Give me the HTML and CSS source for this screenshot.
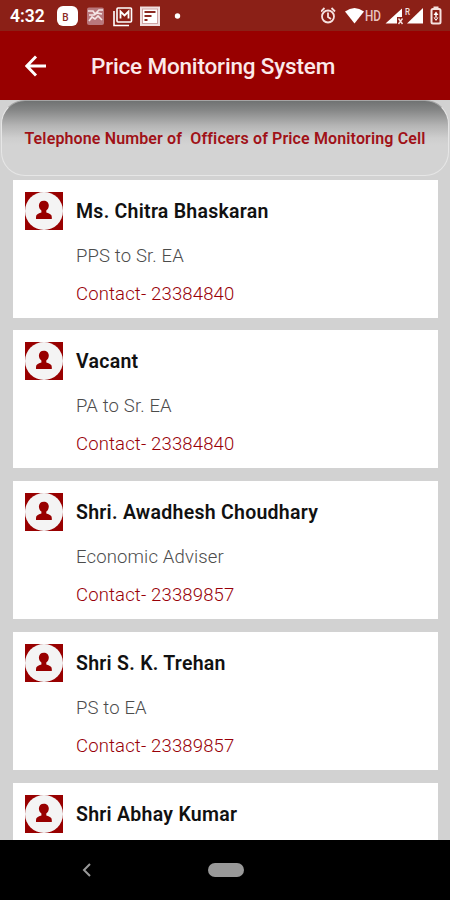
FILE: index.html
```html
<!DOCTYPE html>
<html lang="en">
<head>
  <meta charset="UTF-8">
  <meta name="viewport" content="width=device-width, initial-scale=1.0">
  <title>Price Monitoring System</title>
  <link rel="stylesheet" href="styles.css">
</head>
<body>
  <svg width="0" height="0" class="sprite">
    <symbol id="person" viewBox="0 0 38 38">
      <rect width="38" height="38" fill="#980000"/>
      <circle cx="19" cy="19" r="19" fill="#f4f4f4"/>
      <path d="M18.800 8.700c-3 0-4.900 2-4.900 4.900 0 2.300 1 3.900 2.500 5v2c-3.400 1-5.400 2-5.400 4.400v2h15.800v-2c0-2.400-2.200-3.400-5.500-4.400v-2c1.500-1.100 2.500-2.700 2.500-5 0-2.900-2-4.900-5-4.900z" fill="#980000"/>
    </symbol>
  </svg>

  <div class="screen">
    <div class="statusbar">
      <span class="clock">4:32</span>
      <svg class="notifications" width="124" height="24" viewBox="0 0 124 24">
        <!-- app badge -->
        <rect x="0" y="2" width="21" height="20" rx="6" fill="#fff"/>
        <text x="8.500" y="16.500" font-size="10" font-weight="500" text-anchor="middle" fill="#8b2a22">B</text>
        <!-- news -->
        <rect x="30" y="3.500" width="17" height="17.500" rx="2" fill="#b9777c"/>
        <path d="M31 7h5l2 3 4-4h4M32 11h5l3-2 5 1M32 17l3-4 3 2 3-3 4 4" fill="none" stroke="#f5e6e6" stroke-width="1.700"/>
        <!-- mail -->
        <path d="M57 7v14.500h15" fill="none" stroke="#fff" stroke-width="1.600"/>
        <rect x="60" y="4" width="14.500" height="14" rx="1" fill="#8b2017" stroke="#fff" stroke-width="1.600"/>
        <path d="M63.500 14.500V7.500l4 4 4-4v7" fill="none" stroke="#fff" stroke-width="1.800"/>
        <!-- notes -->
        <rect x="83" y="2.500" width="20" height="19.500" fill="#f0dede"/>
        <rect x="85.500" y="5" width="15" height="14.500" fill="#fff" stroke="#cfa6a6" stroke-width="1"/>
        <path d="M87.500 8h11M87.500 12h7M87.500 16h3" stroke="#8b2a22" stroke-width="2"/>
        <circle cx="120.500" cy="12" r="2.700" fill="#fff"/>
      </svg>
      <svg class="system" width="124" height="24" viewBox="0 0 124 24">
        <!-- alarm -->
        <g fill="none" stroke="#f6e2e0" stroke-width="1.800">
          <circle cx="7" cy="12.500" r="6"/>
          <path d="M7 8.500V13l3 2M0 7.500L3.500 4M14 7.500L10.500 4"/>
        </g>
        <!-- wifi -->
        <path d="M24 7.500Q33.500 .5 43 7.500L33.500 19.500z" fill="#fff"/>
        <text x="44" y="17" font-size="14.500" font-weight="500" textLength="16" lengthAdjust="spacingAndGlyphs" fill="#e9c4c0">HD</text>
        <!-- signal -->
        <path d="M81 4.500v8.500h-5v6.500H64.500z" fill="#fff"/>
        <path d="M77.500 14.500l4 5.500M81.500 14.500l-4 5.500" stroke="#f6e2e0" stroke-width="1.400"/>
        <text x="84" y="11" font-size="9" font-weight="500" textLength="5" lengthAdjust="spacingAndGlyphs" fill="#f6e2e0">R</text>
        <path d="M102 4V19.500H86z" fill="#fff"/>
        <!-- battery -->
        <rect x="110.500" y="5" width="9" height="14.500" rx="1.500" fill="none" stroke="#f6e2e0" stroke-width="2"/>
        <path d="M112.500 3.500h5" stroke="#f6e2e0" stroke-width="2"/>
        <path d="M115 7.500l2.500 3.500h-5zM115 17l2.500-3.500h-5zM114.300 9h1.400v6h-1.400z" fill="#fff"/>
      </svg>
    </div>

    <header class="appbar">
      <svg class="back" width="22" height="22" viewBox="0 0 22 22">
        <path d="M21 11H2M11 1.500L1.800 11l9.200 9.500" fill="none" stroke="#fff" stroke-width="2.900"/>
      </svg>
      <h1 class="title">Price Monitoring System</h1>
    </header>

    <main class="content">
      <h2 class="banner">Telephone Number of&nbsp; Officers of Price Monitoring Cell</h2>

      <div class="list">
        <article class="card">
          <svg class="avatar"><use href="#person"/></svg>
          <div class="details">
            <h3 class="name">Ms. Chitra Bhaskaran</h3>
            <p class="role">PPS to Sr. EA</p>
            <p class="contact">Contact- 23384840</p>
          </div>
        </article>
        <article class="card">
          <svg class="avatar"><use href="#person"/></svg>
          <div class="details">
            <h3 class="name">Vacant</h3>
            <p class="role">PA to Sr. EA</p>
            <p class="contact">Contact- 23384840</p>
          </div>
        </article>
        <article class="card">
          <svg class="avatar"><use href="#person"/></svg>
          <div class="details">
            <h3 class="name">Shri. Awadhesh Choudhary</h3>
            <p class="role">Economic Adviser</p>
            <p class="contact">Contact- 23389857</p>
          </div>
        </article>
        <article class="card">
          <svg class="avatar"><use href="#person"/></svg>
          <div class="details">
            <h3 class="name">Shri S. K. Trehan</h3>
            <p class="role">PS to EA</p>
            <p class="contact">Contact- 23389857</p>
          </div>
        </article>
        <article class="card">
          <svg class="avatar"><use href="#person"/></svg>
          <div class="details">
            <h3 class="name">Shri Abhay Kumar</h3>
          </div>
        </article>
      </div>
    </main>

    <nav class="navbar">
      <svg class="nav-back" width="10" height="14" viewBox="0 0 10 14">
        <path d="M8 1L2 7l6 6" fill="none" stroke="#999" stroke-width="2"/>
      </svg>
      <span class="home"></span>
    </nav>
  </div>
</body>
</html>
```
FILE: styles.css
```css
* {
  box-sizing: border-box;
  margin: 0;
  padding: 0;
}

body {
  width: 450px;
  height: 900px;
  font-family: Roboto, "Liberation Sans", sans-serif;
  overflow: hidden;
}

svg {
  display: block;
  flex-shrink: 0;
}

.sprite {
  position: absolute;
}

.screen {
  height: 900px;
  display: flex;
  flex-direction: column;
  background: #d2d2d2;
}

/* Status bar */
.statusbar {
  height: 31px;
  flex-shrink: 0;
  display: flex;
  align-items: center;
  padding: 0 5px 0 10px;
  background: #8b2017;
}

.clock {
  width: 47px;
  font-size: 17.5px;
  font-weight: 600;
  color: #fff;
}

.system {
  margin-left: auto;
}

/* App bar */
.appbar {
  height: 69px;
  flex-shrink: 0;
  display: flex;
  align-items: center;
  padding-left: 25px;
  background: #980000;
}

.title {
  margin-left: 44px;
  font-size: 22.5px;
  font-weight: 500;
  letter-spacing: -0.17px;
  color: #fbe9e9;
  white-space: nowrap;
}

/* Content */
.content {
  flex: 1;
  min-height: 0;
  overflow: hidden;
}

.banner {
  height: 76px;
  margin: 0 1px;
  display: flex;
  align-items: center;
  justify-content: center;
  border: 1px solid #e6e6e6;
  border-top-color: #a5a5a5;
  border-radius: 24px;
  background: linear-gradient(#707272 0, #858686 12%, #b4b4b4 33%, #cecece 50%, #d3d3d3 60%);
  font-size: 16px;
  font-weight: 600;
  letter-spacing: 0.13px;
  color: #a01218;
  white-space: nowrap;
}

.list {
  display: flex;
  flex-direction: column;
  gap: 12.8px;
  padding: 3.6px 12px 0 13px;
}

.card {
  height: 138px;
  flex-shrink: 0;
  display: flex;
  gap: 13px;
  padding: 12px;
  background: #fff;
}

.avatar {
  width: 38px;
  height: 38px;
}

.details {
  white-space: nowrap;
}

.name {
  padding-top: 1px;
  line-height: 38px;
  font-size: 19.5px;
  font-weight: 600;
  letter-spacing: 0.27px;
  color: #111;
}

.role,
.contact {
  line-height: 24px;
  font-size: 18.5px;
  font-weight: 300;
  letter-spacing: 0.15px;
}

.role {
  margin-top: 13px;
  color: #4c4c4c;
}

.contact {
  margin-top: 14px;
  color: #980008;
}

/* Bottom navigation */
.navbar {
  height: 60px;
  flex-shrink: 0;
  display: flex;
  align-items: center;
  padding-left: 82px;
  background: #000;
}

.home {
  width: 36px;
  height: 14px;
  margin-left: 116px;
  border-radius: 7px;
  background: #999;
}
```
